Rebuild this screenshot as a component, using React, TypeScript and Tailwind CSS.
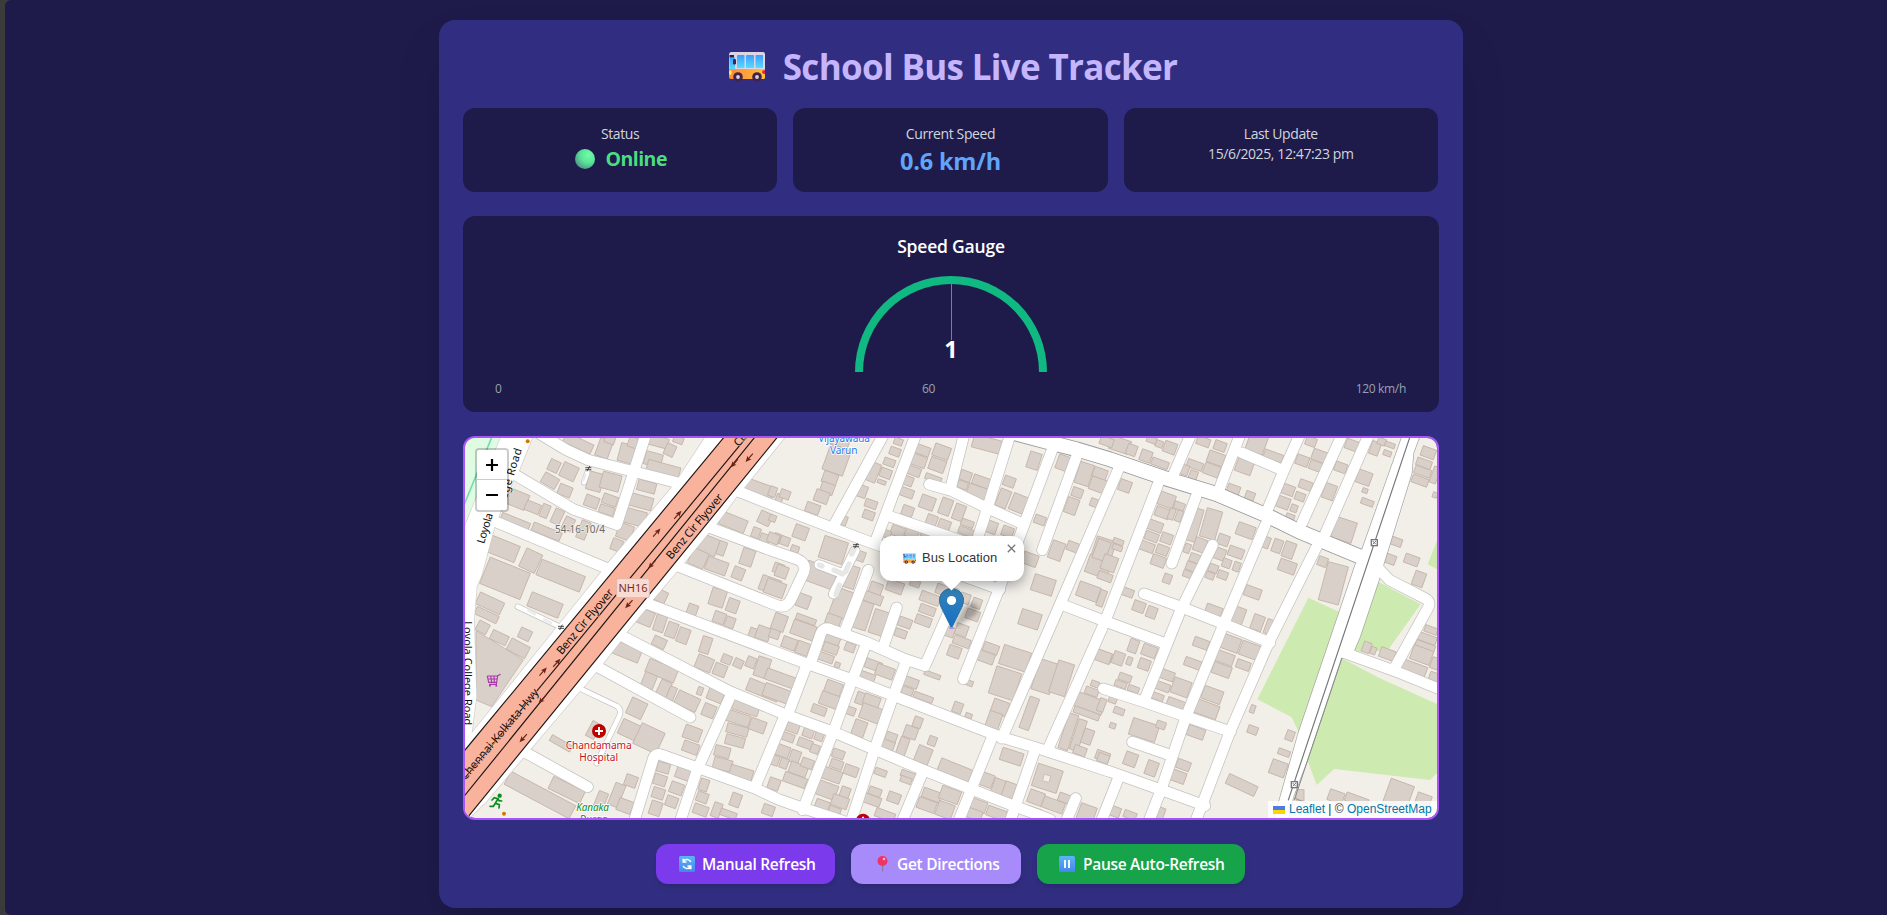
import React from "react";

type Box = number[];

const WEST: Box[] = [
  [385,40,90,30,25],[462,55,40,55],[480,28,30,25],[530,70,45,55,15],[550,38,30,30],[625,35,60,30,15],[685,30,30,20],[610,88,52,40,15],[660,60,30,35,25],[640,118,100,35,15],
  [312,108,32,35,25],[357,125,48,45,25],[300,152,48,34,30],[345,182,40,32,22],[435,155,45,55,15],[482,155,58,50,15],[425,215,42,34],[480,210,45,30],[470,240,45,25,18],
  [590,170,55,32,15],[572,215,72,38,15],[555,262,65,45,15],[525,305,45,45],[500,345,32,35],
  [203,208,60,48,22],[248,232,45,30,22],[285,243,24,40,22],[322,260,28,45,25],[355,282,30,40,25],[400,300,28,55,22],[195,277,90,28,22],[290,305,90,26,22],
  [155,355,100,52,22],[242,392,52,60,25],[332,437,140,50,22],[165,445,130,85,22],[285,525,100,45,22],[120,520,80,38,25],[110,555,72,24,25],[98,592,35,32,28],[148,623,52,30,25],[205,655,62,38,28],[225,613,36,32,25],
  [930,175,88,34],[988,205,20,25],[945,265,38,38,25],[850,277,80,40,22],[918,308,24,30],[945,325,30,25],[980,325,20,30],[775,345,60,52,22],[815,355,24,42],[892,382,38,50,18],[745,385,50,50,25],[800,408,65,40],[865,430,34,36,22],[960,465,60,45],[985,415,30,30],
  [630,497,42,35,25],[803,503,45,52,18],[848,527,34,40],[727,540,30,34],[808,563,35,34],[840,577,28,32],[908,610,22,32],[940,610,42,40],[975,608,30,35],
  [585,562,50,45,22],[630,580,32,50,18],[665,600,32,45],[700,617,34,45],[628,637,40,30,25],[767,645,30,50,18],[763,700,50,42,22],[810,720,38,36,22],[830,688,30,26,22],[865,700,28,26,25],[903,697,28,32,22],[937,712,40,60,18],[975,740,40,30],[940,780,100,38,22],
  [530,665,85,40,22],[635,722,92,42,22],[597,752,38,44,22],[642,775,34,46,25],[665,790,22,40,22],[712,813,70,42,25],[750,783,16,24],[797,795,48,38,22],[777,842,38,38,22],[560,835,50,52,25],[540,900,62,48,25],[597,925,76,68,25],[727,910,52,40],[722,953,48,32],[430,900,28,50,28],[333,940,70,20,30],
  [887,833,80,32,18],[865,865,70,34,18],[862,900,65,28,15],[855,933,58,30,15],[817,965,46,32,15],[923,887,48,36],[818,1003,56,34,15],[873,1030,70,36,17],
  [270,1095,220,44,28],[350,1080,105,40,26],[543,1053,36,34],[500,1095,32,70,22],[453,1110,30,50,22],[525,1128,45,38],[640,1013,38,30,15],[630,1050,38,32,18],[625,1090,36,32,18],[617,1135,34,42,18],[700,1032,46,32],[680,1075,40,34],[665,1115,35,32],[762,1065,26,36,18],[757,1102,34,30],[752,1140,44,30],[800,1140,26,44],[857,1110,30,40],[835,1152,50,20],[955,1140,35,30],
];

const MIDDLE: Box[] = [
  [650,42,85,40,15],[210,35,55,30],[200,90,65,80],[180,145,45,35],[172,175,40,32],[155,200,42,36],[128,235,42,30],[45,193,30,26],[8,185,22,30],
  [305,125,42,58,22],[347,130,34,28],[335,156,26,12],[273,183,36,36],[303,222,36,24],[296,255,34,26],[222,272,18,28],[375,65,32,24],[358,97,34,22],[385,35,26,20],
  [455,60,50,28],[445,92,48,34],[432,124,40,26],[412,152,34,28],[410,188,42,26],[515,65,50,38],[502,105,48,38],[490,145,50,18],[472,218,44,40],[527,230,34,50],[567,247,32,48],[413,243,34,30],[485,272,32,34],[523,285,36,30],[592,280,38,20],[588,305,46,22],
  [587,138,34,30],[578,165,30,22],[635,155,55,30],[622,185,60,34],[718,155,34,30],[700,205,34,54,22],[745,220,45,52,22],[792,92,36,50,18],[810,270,34,26],[665,292,32,36],[713,305,34,30],[878,98,34,44],
  [943,132,44,66,18],[990,130,42,30],[985,165,50,40],[922,188,32,28],[905,228,36,48],[972,218,22,24],
  [385,305,45,30],[425,310,40,28],[470,312,36,20],[350,312,26,22],[860,362,40,55],[908,350,34,28],[780,388,46,36],[1000,360,60,70,18],[985,410,70,55],[820,465,66,50,18],[780,568,62,48,18],[955,485,66,45],
  [92,307,42,40],[8,265,20,20],[10,325,34,30],[45,333,28,26],[75,357,24,20],[190,360,74,68,18],[150,435,95,60],[270,378,30,30],[35,425,36,36],[15,475,60,45],[240,440,42,68,18],[213,520,50,85],[190,570,45,30],[275,555,50,85,18],[328,578,48,74,18],[318,475,38,34],[310,505,55,30],[375,470,50,35],[435,460,30,20],[100,513,40,40],[28,577,40,50],[108,568,62,18],[100,600,72,44],[58,640,44,34],[98,655,38,38],
  [480,505,60,30],[472,540,48,26],[460,572,48,28],[405,578,40,28],[392,610,36,24],[518,480,40,30],[585,505,30,30],[620,520,28,30],[608,555,40,30],[575,600,36,34],[538,605,30,30],[575,635,52,26],[553,665,38,34],[187,630,45,24],[182,655,46,28],[168,683,46,24],[240,652,30,26],[202,705,16,16],[310,705,50,28],[345,725,55,34],[292,740,46,24],
  [663,655,46,28],[648,682,50,32],[735,685,85,60,18],[705,760,78,85,18],[690,832,48,42],[672,870,40,48],[487,735,50,14],[422,757,46,28],[412,783,34,22],[460,802,60,18],[563,833,28,32],[596,857,20,14],[600,760,18,16],
  [825,740,58,95,18],[875,745,50,100,18],[778,850,30,100],[1000,680,50,30],[965,785,40,22],[958,820,90,44],[950,850,80,20],[895,905,30,110,18],[925,915,26,95,18],[953,920,30,45],[975,762,24,18],[930,962,38,26],[998,978,42,28],
  [30,745,90,34],[20,790,80,40],[190,775,50,40],[178,810,56,40],[147,840,44,26],[272,805,28,36],[305,812,50,32],[302,850,62,46],[268,895,38,48],[242,843,28,24],[68,893,38,28],[55,922,36,24],[115,908,32,28],[148,918,26,28],[105,940,44,26],[135,957,26,26],[35,962,48,34],[75,980,30,38],[12,990,30,30],[42,1000,24,30],[85,1018,54,34],[112,1000,36,28],[75,1050,70,30],[12,1062,34,34],
  [443,877,26,32],[422,907,40,36],[398,950,28,56],[362,925,34,34],[355,945,36,26],[460,975,44,50,22],[487,933,24,28],[555,1020,100,38,22],[205,972,36,26],[200,1003,38,26],[243,1022,42,30],[185,1035,60,36],[170,1080,62,44],[225,1088,28,34],[210,1115,50,34],[157,1125,42,28],[193,1145,36,28],[332,1027,36,20],[415,1035,46,20],[408,1050,34,18],[315,1085,38,24],[305,1110,55,28],[372,1103,38,30],[345,1155,60,26],
  [485,1095,56,30],[540,1095,60,40],[470,1125,56,34],[525,1140,50,44],[620,1125,60,34],[610,1152,52,30],[680,1150,60,30],[650,1050,40,40],[685,1070,34,46],[717,1080,34,46],[725,980,66,38,18],[832,1045,78,70,18],[798,1103,46,40],[850,1125,66,34],[790,1145,46,26],[885,1105,40,26],[950,1150,50,50],
];

const EAST: Box[] = [
  [60,45,60,40,18],[20,35,40,25],[95,60,30,32],[138,78,34,34],[180,100,52,22],[210,53,38,34],[155,30,30,18],[178,42,22,20],
  [310,35,40,25],[360,48,36,28],[348,85,50,36],[335,120,48,34],[285,105,48,24],[280,135,24,26],[255,120,22,30],[470,40,55,55],[520,78,58,24],[433,110,50,40],[400,180,38,30],[450,197,28,24],[633,35,32,26],[607,92,38,30],[658,78,44,34],[648,108,40,28],[755,45,38,30],[722,112,36,28],
  [565,180,36,30],[617,165,40,26],[600,200,30,24],[550,218,38,34],[582,235,20,22],[570,262,26,20],[688,185,36,46],[792,143,44,40],[795,182,16,14],[802,217,38,18],[825,55,28,40],[845,35,24,20],[870,45,30,14],[862,70,24,16],[732,300,64,64,18],[985,68,42,30],[972,100,46,24],[968,125,50,24],[960,152,50,24],[1005,135,20,50],[1005,195,14,16],
  [888,335,36,24],[872,388,30,28],[935,390,44,28],[957,447,34,44],[993,600,40,20],[980,625,60,24],[975,650,60,24],[965,675,62,44],[940,715,80,34],[1003,740,30,24],[1005,700,24,34],
  [75,168,36,34],[200,210,48,40],[238,228,32,22],[188,248,44,30],[215,252,18,34],[237,258,18,34],[165,288,46,30],[155,320,40,26],[200,325,34,30],[140,350,46,28],[187,360,36,28],[175,393,42,32],[202,446,24,28],[285,285,28,100,16],[333,282,48,88,16],[300,345,36,40],[262,355,18,28],[285,385,32,26],[275,410,34,26],[262,432,26,20],[437,302,54,38],[370,330,34,32],[408,367,46,30],[360,372,32,34],[380,400,26,26],[410,410,20,28],[368,435,30,24],[340,415,28,24],[330,437,26,20],[500,338,18,34],[532,348,28,40],[567,360,34,48],[562,410,52,36],[458,487,50,32],[668,395,28,28],[700,460,62,118,15],
  [5,360,40,60],[55,335,32,16],[52,353,30,16],[28,400,44,46],[15,440,44,24],[5,505,20,50],[82,487,38,24],[117,530,36,32],[155,547,30,34],[342,540,50,26],[415,557,36,50],[473,578,34,46],[513,592,34,44],
  [10,680,46,34],[100,648,28,40],[148,663,44,34],[55,685,34,38],[88,693,16,24],[133,703,34,32],[303,640,46,28],[278,700,50,26],[75,743,38,22],[62,763,36,18],[100,777,34,18],[392,640,56,44],[372,683,60,34],[365,720,56,34],[455,663,70,44],[430,705,42,26],[200,735,46,28],[188,770,44,24],[243,772,54,48],[172,800,38,20],[228,820,54,24],[337,795,60,40],[320,838,70,42],[288,907,52,32],
  [5,825,20,40],[38,810,24,18],[57,843,32,20],[38,887,18,16],[132,900,82,52,18],[183,885,28,22],[92,988,38,40],[10,985,34,26],[155,1015,34,44],[250,1005,42,28],[235,1040,44,34],[458,837,14,24],[458,900,30,24],[570,917,24,30],[552,968,36,18],[535,1015,48,44],[425,1065,94,32,25],[600,1095,24,32,0],[895,1095,74,80],[708,1100,46,34],[770,1110,70,26],[970,1110,44,36],[800,652,24,32],[820,662,16,22],[862,672,46,30],[45,1145,32,30],[90,1155,38,22],[183,1150,20,34],
];

const ROADS: string[] = [
  "M270 12L350 60L415 90L690 160", "M175 130L200 137L370 238L500 284L587 15", "M105 262L485 421",
  "M850 178L960 222L1250 333L1650 478", "M780 293L960 360L1040 387Q1070 400 1062 425L1022 510Q1008 534 985 528L680 407",
  "M590 520L960 660L1060 697L1210 750L1330 797L1650 920L1780 960L1980 1025L2135 1080L2265 1127",
  "M510 615L840 785L1005 853L1155 908L1270 957L1415 1018L1550 1072L1680 1123L1800 1168",
  "M438 708L721 862", "M220 964L413 1071", "M552 1175L610 985Q617 967 635 975L740 1012L915 1075L985 1108L1050 1131L1200 1180",
  "M845 790L742 1018L690 1175", "M1005 855L915 1072",
  "M1300 15L1155 280", "M1397 15L1275 338", "M1542 15L1503 170", "M1438 163L1505 182L1610 233L1722 283", "M1310 256L1590 352", "M1682 10L1612 235L1575 350L1540 430",
  "M1810 50L1705 330L1650 470L1540 747", "M1881 75L1777 360", "M2005 118L1828 528L1655 925",
  "M1628 918L1565 1075L1525 1175", "M1832 522L1960 572L2137 637", "M2125 160L1965 575L1793 960", "M1753 965L1680 1175",
  "M2238 200L2165 400", "M2288 345L2190 545L2083 812", "M2082 491L2190 530L2325 583L2460 638", "M2446 285L2320 585L2208 860L2133 1080L2096 1175",
  "M1960 776L2080 815L2210 860L2342 905", "M2047 936L2160 975", "M2600 350L2455 640L2340 905L2260 1115L2236 1175",
  "M2222 15L2170 135", "M2370 15L2305 185", "M2375 68L2497 120", "M2549 15L2500 125L2450 245", "M2676 15L2550 292", "M2756 15L2620 325",
  "M1080 705L1112 612Q1120 590 1142 598L1245 635L1365 688L1425 707L1490 560L1515 490", "M1340 533L1300 650", "M1255 420L1183 608",
  "M1247 645L1205 755L1152 900L1058 1140", "M1368 695L1330 797L1275 955L1203 1175", "M1072 700L1012 858", "M1417 1030L1356 1175", "M1877 1105L1848 1175", "M2005 1045L1953 1175",
  "M2785 415L2818 450L2925 505Q2945 515 2933 535L2835 712", "M2690 671L2835 723L2970 778",
];

const SERVICE: string[] = ["M395 778L500 828Q516 838 508 858L440 1000", "M203 530L325 588", "M412 128L402 157"];

const MAIN = "M1650 -2L1790 35L1880 58L1980 88L2140 143L2300 192L2450 256L2550 305L2735 382";
const LOYOLA = "M155 15L250 15L207 122L190 150L145 262L133 292L95 435L80 470L72 570L79 800L65 910L30 950L30 325Z";
const FRONTAGE = "M770 15L685 145L662 176L475 398L452 428L330 580L65 910L20 960L20 1200L108 1116L218 985L242 957L388 785L402 770L437 728L460 700L508 638L530 607L585 540L608 510L680 425L705 395L775 310L800 282L860 200L885 170L1010 15Z";
const TRUNK = "M2858 15L2735 362L2715 407L2545 910L2470 1175L2513 1175L2530 1100L2572 990L2675 685L2712 662L2730 620L2785 455L2800 405L2885 130L2890 70L2910 15Z";

function Buildings({ items, dx }: { items: Box[]; dx: number }) {
  return (
    <g transform={`translate(${dx} 0)`} fill="#d9d0c9" stroke="#c5b5aa" strokeWidth="2.6">
      {items.map(([x, y, w, h, r = 20], i) => (
        <rect key={i} x={x - w / 2} y={y - h / 2} width={w} height={h} transform={`rotate(${r} ${x} ${y})`} />
      ))}
    </g>
  );
}

function Arrow({ x, y, r }: { x: number; y: number; r: number }) {
  return (
    <g transform={`translate(${x} ${y}) rotate(${r})`}>
      <path d="M-16 0H6" stroke="#6b2417" strokeWidth="3.5" />
      <path d="M-1 -8L17 0L-1 8L3 0Z" fill="#6b2417" />
    </g>
  );
}

function Gate({ x, y }: { x: number; y: number }) {
  return <path d={`M${x - 9} ${y - 3}h18M${x - 9} ${y + 3}h18M${x + 4} ${y - 8}l-8 16`} stroke="#333" strokeWidth="2.600" fill="none" />;
}

function Crossing({ x, y }: { x: number; y: number }) {
  return (
    <g transform={`translate(${x} ${y})`}>
      <rect x="-9" y="-9" width="18" height="18" fill="#fff" stroke="#777" strokeWidth="4" />
      <path d="M-5 -5L5 5M5 -5L-5 5" stroke="#777" strokeWidth="3" />
    </g>
  );
}

function StreetMap() {
  return (
    <svg className="block h-[380px] w-[972px]" viewBox="45 24 2916 1140" fontFamily="'Noto Sans', sans-serif">
      <rect x="0" y="0" width="3000" height="1200" fill="#f2efe9" />
      <path d="M30 15H160L45 295L30 330Z" fill="#dffce2" />
      <path d="M128 15L40 230" stroke="#74dcb5" strokeWidth="5" />
      <g fill="#cdebb0">
        <path d="M2575 503L2667 545L2547 908L2525 862L2422 808Z" />
        <path d="M2785 455L2912 523L2812 663L2712 665L2728 620Z" />
        <path d="M2675 685L2790 745L2970 826L2970 1020L2940 1050L2653 1017L2600 1065L2572 990Z" />
        <path d="M2965 322L2933 403L2965 420Z" />
      </g>
      <path d="M78 602L220 690L125 830L78 810Z" fill="#d9d0c9" stroke="#c5b5aa" strokeWidth="2.6" />
      <Buildings items={WEST} dx={0} />
      <Buildings items={MIDDLE} dx={960} />
      <Buildings items={EAST} dx={1950} />
      <rect x="1780" y="1035" width="20" height="20" transform="rotate(15 1790 1045)" fill="#f2efe9" stroke="#c5b5aa" strokeWidth="2" />

      <g fill="none" strokeLinecap="round" strokeLinejoin="round">
        <g stroke="#c3c3c1">
          <path d={LOYOLA} strokeWidth="4" />
          <path d={FRONTAGE} strokeWidth="4" />
          <path d={TRUNK} strokeWidth="4" stroke="#8c8c8c" />
          {SERVICE.map((d) => <path key={d} d={d} strokeWidth="18" />)}
          {ROADS.map((d) => <path key={d} d={d} strokeWidth="36" />)}
          <path d={MAIN} strokeWidth="47" stroke="#999" />
          <path d="M1215 362L1150 492M1107 404L1170 428" strokeWidth="32" />
        </g>
        <g stroke="#fff">
          {SERVICE.map((d) => <path key={d} d={d} strokeWidth="14" />)}
          {ROADS.map((d) => <path key={d} d={d} strokeWidth="31.500" />)}
          <path d={MAIN} strokeWidth="42" />
          <path d="M1215 362L1150 492M1107 404L1170 428" strokeWidth="27" />
          <path d={LOYOLA} fill="#fff" strokeWidth="1" />
          <path d={FRONTAGE} fill="#fff" strokeWidth="1" />
          <path d={TRUNK} fill="#fff" strokeWidth="1" />
        </g>
        <path d="M1215 352L1205 372M1197 402L1187 425M1168 466L1158 494M1108 405L1116 408M1152 420L1178 432" stroke="#e7e7e5" strokeWidth="16" />
        <path d="M235 542L255 552M283 569L303 579M406 135L400 150" stroke="#ececec" strokeWidth="8" />
        <path d="M2880 20L2515 1110" stroke="#777" strokeWidth="3.5" />
        <path d="M2675 685L2533 1110" stroke="#888" strokeWidth="3" />
        <path d="M2533 1104L2572 1120" stroke="#999" strokeWidth="3" />
      </g>

      <path d="M830 12L30 978L30 1190L990 12Z" fill="#f9b29c" stroke="#1d1716" strokeWidth="3.5" />
      <path d="M895 15L30 1062M918 17L30 1114" stroke="#1d1716" strokeWidth="3.5" />
      <Arrow x={683} y={255} r={-48} />
      <Arrow x={620} y={308} r={-48} />
      <Arrow x={279} y={725} r={-48} />
      <Arrow x={320} y={699} r={-48} />
      <Arrow x={898} y={83} r={132} />
      <Arrow x={853} y={100} r={132} />
      <Arrow x={606} y={403} r={132} />
      <Arrow x={537} y={522} r={132} />
      <Arrow x={277} y={808} r={132} />
      <Arrow x={220} y={924} r={132} />

      <Gate x={415} y={116} />
      <Gate x={333} y={592} />
      <Gate x={1218} y={347} />
      <Crossing x={2773} y={338} />
      <Crossing x={2533} y={1064} />

      <g fontSize="34" fill="#0c0c0c" stroke="#f9b29c" strokeWidth="3" paintOrder="stroke">
        <text transform="translate(335 676) rotate(-50)" textLength="244">Benz Cir Flyover</text>
        <text transform="translate(664 390) rotate(-50)" textLength="244">Benz Cir Flyover</text>
        <text transform="translate(46 1052) rotate(-50)" textLength="345">Chennai-Kolkata Hwy</text>
        <text transform="translate(866 52) rotate(-50)">Cir</text>
      </g>
      <g fontSize="33" fill="#0c0c0c" stroke="#fff" strokeWidth="3" paintOrder="stroke">
        <text transform="translate(102 343) rotate(-73)" textLength="94">Loyola</text>
        <text transform="translate(170 208) rotate(-73)" textLength="156">ege Road</text>
        <text transform="translate(43 574) rotate(90)" textLength="312">Loyola College Road</text>
      </g>
      <rect x="500" y="446" width="98" height="57" rx="5" fill="#f8dcd4" stroke="#e3b7aa" strokeWidth="3" />
      <g textAnchor="middle" strokeWidth="4" paintOrder="stroke">
        <text x="549" y="487" fontSize="33" fill="#7b2c1d">NH16</text>
        <text x="390" y="308" fontSize="30" fill="#6b6b6b" stroke="#f2efe9" textLength="150">54-16-10/4</text>
        <g fill="#c4121f" stroke="#fff" fontSize="30.5">
          <text x="446" y="957" textLength="198">Chandamama</text>
          <text x="446" y="992" textLength="116">Hospital</text>
        </g>
        <g fill="#0c8a20" stroke="#fff" fontSize="30" fontStyle="italic">
          <text x="428" y="1144" textLength="98">Kanaka</text>
          <text x="430" y="1180">Durga</text>
        </g>
        <g fill="#1f78ee" stroke="#fff" fontSize="30">
          <text x="1182" y="36" textLength="155">Vijayawada</text>
          <text x="1181" y="72" textLength="82">Varun</text>
        </g>
      </g>

      <g fill="#bf0000">
        <circle cx="447" cy="903" r="21" />
        <circle cx="1239" cy="1172" r="21" />
      </g>
      <path d="M447 891V915M435 903H459M1239 1160V1180" stroke="#fff" strokeWidth="6" />
      <g fill="none" stroke="#ac39ac" strokeWidth="3.5">
        <path d="M152 733L143 737L139 764M112 738H144M112 738L116 757H140M122 738L125 757M132 738L133 757M114 747H141M117 763H141" />
      </g>
      <circle cx="120" cy="767" r="3" fill="#ac39ac" /><circle cx="139" cy="767" r="3" fill="#ac39ac" />
      <g fill="none" stroke="#0b8c1f" strokeWidth="5" strokeLinecap="round">
        <circle cx="149" cy="1097" r="4" fill="#0b8c1f" />
        <path d="M126 1110L133 1103L144 1106L136 1120L148 1124L147 1134M136 1120L130 1129H120M144 1106L147 1112L155 1113" />
      </g>
      <circle cx="233" cy="34" r="6" fill="#cc7a00" /><circle cx="162" cy="1151" r="6" fill="#cc7a00" />
    </svg>
  );
}

function BusIcon({ className }: { className: string }) {
  return (
    <svg className={className} viewBox="0 0 36 30" aria-hidden="true">
      <defs>
        <linearGradient id="busBody" x1="0" x2="1"><stop offset="0" stopColor="#ff8a3c" /><stop offset=".5" stopColor="#ffa33a" /><stop offset="1" stopColor="#fbc531" /></linearGradient>
        <linearGradient id="busGlass" x1="0" y1="0" x2="0" y2="1"><stop offset="0" stopColor="#3f9bff" /><stop offset="1" stopColor="#54dcff" /></linearGradient>
      </defs>
      <path d="M2.500 0H34Q36 0 36 2V17H0V3Q0 0 2.500 0Z" fill="#dcd6e4" />
      <path d="M0 17H36V25.500Q36 27 34.500 27H2Q0 27 0 25Z" fill="url(#busBody)" />
      <path d="M.5 5.500H6V17H.5Z" fill="url(#busGlass)" />
      <path d="M.5 3H5V5.500H.5Z" fill="#2b2144" />
      <rect x="8" y="3" width="7.500" height="13" rx=".8" fill="url(#busGlass)" />
      <rect x="17" y="3" width="8" height="13" rx=".8" fill="url(#busGlass)" />
      <rect x="26.500" y="3" width="7.500" height="13" rx=".8" fill="url(#busGlass)" />
      <rect x="4" y="7" width="3" height="5.500" rx="1.200" fill="#3a2450" />
      <ellipse cx="1.300" cy="20.500" rx="1.300" ry="2.500" fill="#ffe94e" />
      <path d="M36 18Q33 18 33 20T36 22Z" fill="#e8234f" />
      <circle cx="9" cy="25" r="4.800" fill="#43234d" /><circle cx="9" cy="25" r="1.900" fill="#d9d3de" />
      <circle cx="28" cy="25" r="4.800" fill="#43234d" /><circle cx="28" cy="25" r="1.900" fill="#d9d3de" />
    </svg>
  );
}

function StatusDot() {
  return (
    <svg className="mr-[10px] size-5" viewBox="0 0 20 20" aria-hidden="true">
      <defs><radialGradient id="dot" cx=".68" cy=".3" r=".8"><stop offset="0" stopColor="#6dffaa" /><stop offset=".5" stopColor="#5be398" /><stop offset="1" stopColor="#4b8f86" /></radialGradient></defs>
      <circle cx="10" cy="10" r="10" fill="url(#dot)" />
    </svg>
  );
}

function BlueTile({ children }: { children: React.ReactNode }) {
  return (
    <svg className="h-4 w-4" viewBox="0 0 16 16" aria-hidden="true">
      <defs><linearGradient id="tile" x1="0" y1="0" x2="0" y2="1"><stop offset="0" stopColor="#5cb4f7" /><stop offset="1" stopColor="#4586ee" /></linearGradient></defs>
      <rect width="16" height="16" rx="1.500" fill="url(#tile)" />
      {children}
    </svg>
  );
}

function Marker() {
  return (
    <svg className="absolute left-[474px] top-[150px] h-[41px] w-[60px]" viewBox="0 0 60 41" aria-hidden="true">
      <defs>
        <linearGradient id="pin" x1="0" y1="0" x2="0" y2="1"><stop offset="0" stopColor="#3883b7" /><stop offset="1" stopColor="#126fc6" /></linearGradient>
        <filter id="soft" x="-30%" y="-30%" width="160%" height="160%"><feGaussianBlur stdDeviation="2.200" /></filter>
      </defs>
      <path d="M13 41L24 20Q31 12 38 17Q42 24 32 30Z" fill="#000" opacity=".26" filter="url(#soft)" />
      <path d="M12.500 .5C5.500 .5 .5 5.800 .5 12.300C.5 15.500 1.700 18.500 3.300 21.500L12.500 40L21.700 21.500C23.300 18.500 24.500 15.500 24.500 12.300C24.500 5.800 19.500 .5 12.500 .5Z" fill="url(#pin)" stroke="#2e6c97" />
      <circle cx="12.500" cy="12.500" r="4.600" fill="#fff" />
      <rect x="10.500" y="39" width="4" height="2" fill="#a78bfa" />
    </svg>
  );
}

const card = "rounded-xl bg-[#1e1b4b]";

export default function App() {
  return (
    <div className="flex h-[915px] w-full overflow-hidden bg-[#3b3b3b] font-['Open_Sans','Noto_Sans',sans-serif]">
      <main className="ml-[5px] flex flex-1 items-start justify-center overflow-hidden rounded-l-md bg-[#1e1b4b] pl-[10px] pt-5">
        <section className="h-[888px] w-[1024px] rounded-2xl bg-[#312e81] p-6 shadow-2xl">
          <h1 className="flex h-10 items-center justify-center whitespace-nowrap pl-[4px] pt-[5px] text-[35px] font-bold leading-10 tracking-[-0.680px] text-[#c4b5fd]">
            <BusIcon className="mr-[18px] h-[30px] w-9" />
            <span>School Bus Live Tracker</span>
          </h1>

          <div className="mt-6 grid grid-cols-3 gap-4 pr-px text-center">
            <div className={`${card} h-[84px] pt-4 text-gray-300`}>
              <p className="text-[14px] leading-5 tracking-[-0.390px]">Status</p>
              <p className="mt-px flex items-center justify-center pl-[2px] text-[19.500px] font-bold leading-7 tracking-[-0.5px] text-[#4ade80]">
                <StatusDot />
                Online
              </p>
            </div>
            <div className={`${card} h-[84px] pt-4 text-gray-300`}>
              <p className="text-[14px] leading-5 tracking-[-0.390px]">Current Speed</p>
              <p className="mt-px text-[23.500px] font-bold leading-8 tracking-[-0.2px] text-[#60a5fa]">0.6 km/h</p>
            </div>
            <div className={`${card} h-[84px] pt-4 text-gray-300`}>
              <p className="text-[14px] leading-5 tracking-[-0.390px]">Last Update</p>
              <p className="text-[14px] leading-5 tracking-[-0.390px]">15/6/2025, 12:47:23 pm</p>
            </div>
          </div>

          <div className={`${card} mt-6 flex h-[196px] flex-col items-center px-8 pt-4`}>
            <h2 className="text-[17.500px] font-semibold leading-7 tracking-[-0.2px] text-white">Speed Gauge</h2>
            <div className="mt-4 flex h-24 w-48 flex-col items-center rounded-t-full border-8 border-b-0 border-[#10b981]">
              <div className="h-14 w-px bg-[#10b981]" />
              <span className="-mt-[7px] text-[23.500px] font-bold leading-8 text-white">1</span>
            </div>
            <div className="mt-[9px] flex w-full justify-between pr-px text-[12px] leading-4 tracking-[-0.320px] text-gray-400">
              <span>0</span>
              <span>60</span>
              <span>120 km/h</span>
            </div>
          </div>

          <div className="relative mt-6 h-96 overflow-hidden rounded-xl border-2 border-[#a855f7] font-['Liberation_Sans',sans-serif]">
            <StreetMap />
            <Marker />
            <div className="absolute left-[415px] top-[98px] h-[45px] w-36 rounded-xl bg-white shadow-[0_3px_14px_rgba(0,0,0,0.4)]">
              <div className="flex h-full items-center gap-[6px] pb-[2px] pl-[23px] text-[13px] text-[#333]">
                <BusIcon className="mt-[2px] h-[11px] w-[13px]" />
                <span className="whitespace-nowrap">Bus Location</span>
              </div>
              <svg className="absolute right-2 top-2 size-[9px]" viewBox="0 0 9 9"><path d="M.8.8l7.400 7.400M8.200.8L.8 8.200" stroke="#757575" strokeWidth="1.300" /></svg>
              <svg className="absolute left-[61px] top-[44px] h-[11px] w-[21px]" viewBox="0 0 21 11"><path d="M0 0H21L10.500 10.500Z" fill="#fff" /></svg>
            </div>
            <div className="absolute left-[10px] top-[10px] w-[34px] rounded-[4px] border-2 border-black/20 bg-white bg-clip-padding">
              <div className="flex h-[30px] items-center justify-center border-b border-[#ccc]">
                <svg className="size-3" viewBox="0 0 12 12"><path d="M6 0V12M0 6H12" stroke="#000" strokeWidth="2.200" /></svg>
              </div>
              <div className="flex h-[30px] items-center justify-center">
                <svg className="size-3" viewBox="0 0 12 12"><path d="M0 6H12" stroke="#000" strokeWidth="2.200" /></svg>
              </div>
            </div>
            <div className="absolute bottom-0 right-0 flex h-[17px] w-[169px] items-center whitespace-nowrap bg-white/80 pl-[5px] text-[12px] leading-[17px] text-[#333]">
              <svg className="mr-1 h-2 w-3" viewBox="0 0 12 8"><path d="M0 0H12V4H0Z" fill="#4c7be1" /><path d="M0 4H12V8H0Z" fill="#ffd500" /></svg>
              <span><span className="text-[#0078a8]">Leaflet</span> | © <span className="text-[#0078a8]">OpenStreetMap</span></span>
            </div>
          </div>

          <div className="mt-6 flex justify-center gap-4 pr-[1px] text-[15.500px] font-semibold leading-6 tracking-[-0.3px] text-white">
            <button className="flex h-10 w-[179px] items-center gap-[7px] whitespace-nowrap rounded-xl bg-[#7c3aed] pl-[23px] shadow-md">
              <BlueTile><path d="M11.800 6A4.200 4.200 0 0 0 4.500 5.300M4.200 10A4.200 4.200 0 0 0 11.500 10.700M4.300 2.800V6H7.500M11.700 13.200V10H8.500" fill="none" stroke="#fff" strokeWidth="1.700" /></BlueTile>
              Manual Refresh
            </button>
            <button className="flex h-10 w-[170px] items-center gap-[9px] whitespace-nowrap rounded-xl bg-[#a78bfa] pl-[26px] shadow-md">
              <svg className="h-4 w-[11px]" viewBox="0 0 11 16" aria-hidden="true"><path d="M5 9H6.200V15L5.600 16L5 15Z" fill="#8d7b9d" /><circle cx="5.500" cy="5" r="5" fill="#ef3465" /><circle cx="7" cy="3" r="1.300" fill="#ffb3cc" /></svg>
              Get Directions
            </button>
            <button className="flex h-10 w-[208px] items-center gap-[8px] whitespace-nowrap rounded-xl bg-[#16a34a] pl-[22px] shadow-md">
              <BlueTile><path d="M6 4V12M10 4V12" stroke="#fff" strokeWidth="1.800" /></BlueTile>
              Pause Auto-Refresh
            </button>
          </div>
        </section>
      </main>
    </div>
  );
}
